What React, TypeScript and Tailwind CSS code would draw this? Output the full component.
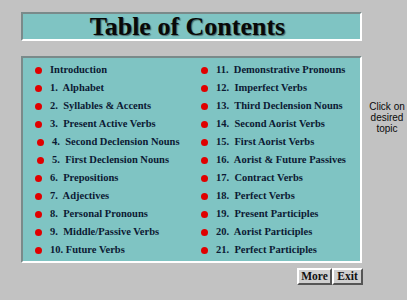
import React from "react";

const left: [string, number][] = [
  ["Introduction", 0],
  ["1.  Alphabet", 0],
  ["2.  Syllables & Accents", 0],
  ["3.  Present Active Verbs", 0],
  ["4.  Second Declension Nouns", 1],
  ["5.  First Declension Nouns", 1],
  ["6.  Prepositions", 0],
  ["7.  Adjectives", 0],
  ["8.  Personal Pronouns", 0],
  ["9.  Middle/Passive Verbs", 0],
  ["10. Future Verbs", 0],
];
const right: [string, number][] = [
  ["11.  Demonstrative Pronouns", 0],
  ["12.  Imperfect Verbs", 0],
  ["13.  Third Declension Nouns", 0],
  ["14.  Second Aorist Verbs", 0],
  ["15.  First Aorist Verbs", 0],
  ["16.  Aorist & Future Passives", 0],
  ["17.  Contract Verbs", 0],
  ["18.  Perfect Verbs", 0],
  ["19.  Present Participles", 0],
  ["20.  Aorist Participles", 0],
  ["21.  Perfect Participles", 0],
];

function Item({ text, shift }: { text: string; shift: number }) {
  return (
    <div className={shift ? "flex h-[18px] items-center pl-[2px]" : "flex h-[18px] items-center"}>
      <span className="h-[7px] w-[7px] shrink-0 rounded-full bg-[#e00000]" />
      <span className="ml-[8px] whitespace-pre text-[10.5px] font-bold text-[#0c1a33]">{text}</span>
    </div>
  );
}

export default function App() {
  return (
    <div
      className="flex h-[300px] w-[407px] bg-[#c2c2c2]"
      style={{ fontFamily: '"Liberation Serif", "Times New Roman", serif' }}
    >
      <div className="ml-[21px] flex w-[342px] flex-col">
        <div className="mt-[12px] flex h-[29px] w-[341px] items-center justify-center border-2 border-t-[#7a8a8a] border-l-[#7a8a8a] border-b-white border-r-white bg-[#7fc4c3] pr-[8px]">
          <span className="text-[26px] font-bold leading-none text-[#080808] [text-shadow:1px_1px_1px_rgba(0,0,0,0.45)]">
            Table of Contents
          </span>
        </div>
        <div className="mt-[15px] flex h-[207px] w-[341px] border-2 border-t-[#7a8a8a] border-l-[#7a8a8a] border-b-white border-r-white bg-[#7fc4c3] pt-[3px]">
          <div className="ml-[12px] flex w-[165px] flex-col">
            {left.map(([t, s]) => (
              <Item key={t} text={t} shift={s} />
            ))}
          </div>
          <div className="ml-[1px] flex flex-col">
            {right.map(([t, s]) => (
              <Item key={t} text={t} shift={s} />
            ))}
          </div>
        </div>
        <div className="mt-[5px] flex justify-end">
          <button className="h-[17px] w-[35px] border-2 border-t-white border-l-white border-b-[#555] border-r-[#555] bg-[#cfcfcf] text-[11.5px] font-bold leading-none text-[#111]">
            More
          </button>
          <button className="h-[17px] w-[31px] border-2 border-t-white border-l-white border-b-[#555] border-r-[#555] bg-[#cfcfcf] text-[11.5px] font-bold leading-none text-[#111]">
            Exit
          </button>
        </div>
      </div>
      <div
        className="ml-[6px] mt-[101px] w-[36px] text-center text-[10px] leading-[11px] text-[#0a0a0a]"
        style={{ fontFamily: '"Liberation Sans", Arial, sans-serif' }}
      >
        Click on desired topic
      </div>
    </div>
  );
}
